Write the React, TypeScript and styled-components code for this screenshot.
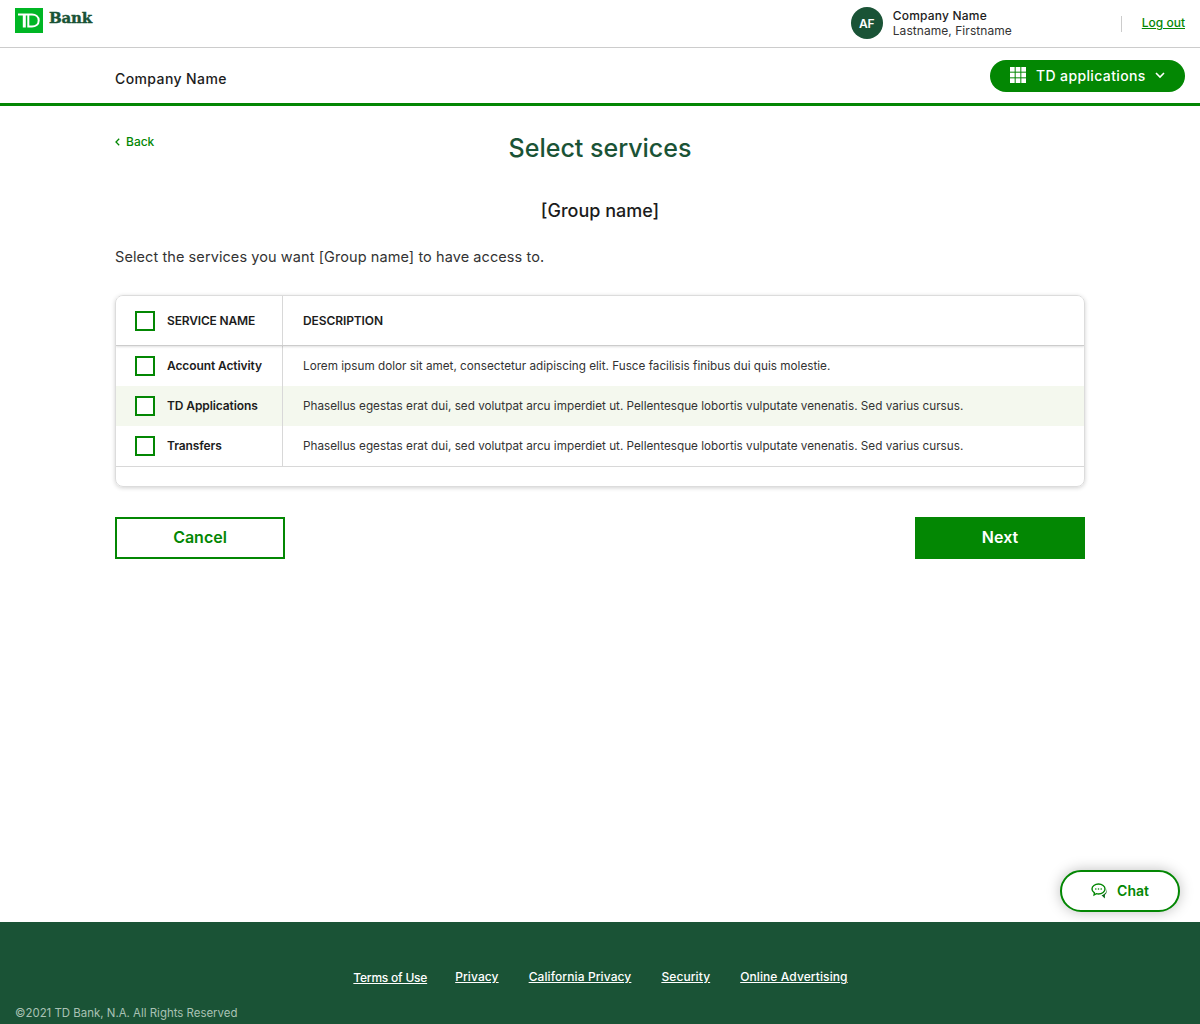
import React from "react";
import styled, { createGlobalStyle } from "styled-components";

const Global = createGlobalStyle`
  html, body { margin: 0; padding: 0; background: #fff; }
  body { font-family: Inter, "Liberation Sans", sans-serif; color: #1c1c1c; }
  * { box-sizing: border-box; }
`;
const Page = styled.div`
  min-height: 1024px; height: 1024px; display: flex; flex-direction: column; position: relative; overflow: hidden;
`;
const TopBar = styled.header`
  height: 48px; flex: none; border-bottom: 1px solid #ccc; display: flex; justify-content: space-between; padding: 0 15px;
`;
const Brand = styled.div`
  display: flex; gap: 6px; padding-top: 8px; align-items: flex-start;
`;
const BankWord = styled.span`
  font-family: "DejaVu Serif", serif; font-weight: 700; font-size: 15px; line-height: 20px; letter-spacing: -0.15px; color: #1a5336;
  -webkit-text-stroke: 0.4px #1a5336;
`;
const Account = styled.div`
  display: flex; align-items: flex-start;
`;
const Avatar = styled.div`
  width: 32px; height: 32px; margin-top: 7px; border-radius: 50%; background: #1a5336; color: #fff;
  font-size: 12px; font-weight: 600; display: flex; align-items: center; justify-content: center;
`;
const Who = styled.div`
  margin-left: 10px; padding-top: 8px; width: 228px; font-size: 12px; line-height: 15px;
`;
const WhoName = styled.div`font-weight: 500; letter-spacing: 0.2px;`;
const WhoPerson = styled.div`color: #333; letter-spacing: 0.05px;`;
const Divider = styled.span`
  width: 1px; height: 16px; margin-top: 16px; background: #ccc;
`;
const LogOut = styled.a`
  margin-left: 20px; margin-top: 15px; font-size: 12px; line-height: 16px; font-weight: 500; color: #038703; text-decoration: underline;
`;
const SubBar = styled.div`
  height: 58px; flex: none; border-bottom: 3px solid #038703; display: flex; justify-content: space-between; padding: 12px 15px 0 115px;
`;
const CompanyLabel = styled.div`
  font-size: 14px; font-weight: 500; line-height: 18px; margin-top: 10px; letter-spacing: 0.4px;
`;
const AppsButton = styled.button`
  width: 195px; height: 32px; border: 0; border-radius: 16px; background: #038703; color: #fff; padding: 0 19px 2px 20px;
  display: flex; align-items: center; font: 500 14px Inter, sans-serif; letter-spacing: 0.37px;
`;
const AppsLabel = styled.span`margin-left: 10px; flex: 1; text-align: left; white-space: nowrap;`;
const Main = styled.main`
  flex: 1; padding: 0 115px; position: relative;
`;
const TitleRow = styled.div`
  position: relative; padding-top: 25px; text-align: center;
`;
const Back = styled.a`
  position: absolute; left: 0; top: 28px; display: flex; align-items: center; gap: 6px; color: #038703; font-size: 12px; line-height: 16px; font-weight: 500;
`;
const Title = styled.h1`
  margin: 0; font-size: 25px; line-height: 34px; font-weight: 500; color: #1a5336;
`;
const Group = styled.h2`
  margin: 34px 0 0; text-align: center; font-size: 18px; line-height: 24px; font-weight: 500; color: #1c1c1c;
`;
const Intro = styled.p`
  margin: 23px 0 0; font-size: 14.5px; line-height: 22px; color: #333; letter-spacing: 0.085px;
`;
const Card = styled.div`
  margin-top: 27px; height: 192px; border: 1px solid #dcdcdc; border-radius: 8px; overflow: hidden; box-shadow: 0 1px 4px rgba(0,0,0,.18);
`;
const Row = styled.div<{ $head?: boolean; $tint?: boolean }>`
  display: grid; grid-template-columns: 167px 1fr;
  height: ${p => (p.$head ? "50px" : "40px")};
  background: ${p => (p.$tint ? "#f4f8ee" : "#fff")};
  ${p => p.$head && "border-bottom: 1px solid #ccc; box-shadow: 0 1px 2px rgba(0,0,0,.12); position: relative;"}
`;
const NameCell = styled.div`
  display: flex; align-items: center; gap: 12px; padding-left: 19px; border-right: 1px solid #d8d8d8;
`;
const DescCell = styled.div<{ $head?: boolean }>`
  display: flex; align-items: center; padding-left: 20px; white-space: nowrap;
  font-size: ${p => (p.$head ? "12px" : "11.72px")}; font-weight: ${p => (p.$head ? 600 : 400)}; color: ${p => (p.$head ? "#1c1c1c" : "#333")};
  letter-spacing: ${p => (p.$head ? "-0.1px" : "0")};
`;
const Box = styled.span`
  width: 20px; height: 20px; flex: none; border: 2px solid #038703; background: #fff;
`;
const RowName = styled.span<{ $head?: boolean }>`
  font-size: 12px; font-weight: 600; white-space: nowrap; color: #1c1c1c; line-height: 16px;
  letter-spacing: ${p => (p.$head ? "-0.17px" : "-0.1px")}; margin-top: ${p => (p.$head ? "0" : "-1px")};
`;
const TableEnd = styled.div`
  border-top: 1px solid #d8d8d8; height: 20px;
`;
const Actions = styled.div`
  display: flex; justify-content: space-between; margin-top: 30px;
`;
const ActionButton = styled.button<{ $primary?: boolean }>`
  width: 170px; height: 42px; padding: 0 0 2px; font: 600 16px Inter, sans-serif; border: 2px solid #038703; border-radius: 0;
  background: ${p => (p.$primary ? "#038703" : "#fff")}; color: ${p => (p.$primary ? "#fff" : "#038703")};
`;
const Chat = styled.button`
  position: absolute; right: 20px; top: 870px; width: 120px; height: 42px; border-radius: 21px; border: 2px solid #038703; background: #fff;
  color: #038703; font: 600 14px Inter, sans-serif; display: flex; align-items: center; justify-content: center; gap: 9px; padding: 0 6px 1px;
  box-shadow: 0 0 14px rgba(0,0,0,.25);
`;
const Footer = styled.footer`
  height: 102px; flex: none; background: #1a5336; padding: 47px 15px 0; position: relative;
`;
const Links = styled.nav`
  display: flex; justify-content: center; gap: 30px; padding-left: 1px;
`;
const FootLink = styled.a`
  color: #fff; font-size: 12px; line-height: 16px; font-weight: 500; text-decoration: underline; letter-spacing: 0.1px;
`;
const TermsLink = styled(FootLink)`
  letter-spacing: -0.22px; margin: 1px -2px -1px 0;
`;
const Copy = styled.div`
  margin-top: 20px; font-size: 11.45px; line-height: 16px; color: #a9c2b4;
`;

const Logo = () => (
  <svg width="28" height="25" viewBox="0 0 28 25" aria-label="TD">
    <rect width="28" height="25" fill="#00b624" />
    <g fill="none" stroke="#fff">
      <path d="M3 6.500H17" strokeWidth="2" />
      <path d="M9.300 6.500V19.500" strokeWidth="3" />
      <path d="M13.300 6.500V18.600H17C20.500 18.600 23.700 16.600 23.700 12.500C23.700 8.500 20.500 6.500 17 6.500" strokeWidth="2" />
    </g>
  </svg>
);
const Grid = () => (
  <svg width="16" height="16" viewBox="0 0 16 16" fill="#fff">
    {[0, 5.67, 11.33].flatMap(y => [0, 5.67, 11.33].map(x => <rect key={`${x}-${y}`} x={x} y={y} width="4.67" height="4.67" />))}
  </svg>
);
const Caret = () => (
  <svg width="12" height="12" viewBox="0 0 12 12" fill="none" stroke="#fff" strokeWidth="1.6"><path d="M2 4l4 4 4-4" /></svg>
);
const BackIcon = () => (
  <svg width="5" height="8" viewBox="0 0 5 8" fill="none" stroke="#038703" strokeWidth="1.3"><path d="M4.200.8L1 4l3.200 3.200" /></svg>
);
const ChatIcon = () => (
  <svg width="17" height="16" viewBox="0 0 17 16">
    <path d="M7.500 1C3.900 1 1 3.200 1 6c0 1.600 1 3 2.400 3.900l-.3 2 2.300-1.200c.7.2 1.400.3 2.100.3 3.600 0 6.500-2.200 6.500-5S11.100 1 7.500 1z" fill="none" stroke="#038703" strokeWidth="1.400" />
    <path d="M15.500 5c1 3.600-1.800 6.500-5 7.300l3.300 3.200.2-3.700c1.800-1.300 2.500-4.300 1.500-6.800z" fill="#0b6b1c" />
    <circle cx="4.800" cy="6" r=".8" fill="#038703" /><circle cx="7.500" cy="6" r=".8" fill="#038703" /><circle cx="10.200" cy="6" r=".8" fill="#038703" />
  </svg>
);

const rows = [
  ["Account Activity", "Lorem ipsum dolor sit amet, consectetur adipiscing elit. Fusce facilisis finibus dui quis molestie."],
  ["TD Applications", "Phasellus egestas erat dui, sed volutpat arcu imperdiet ut. Pellentesque lobortis vulputate venenatis. Sed varius cursus."],
  ["Transfers", "Phasellus egestas erat dui, sed volutpat arcu imperdiet ut. Pellentesque lobortis vulputate venenatis. Sed varius cursus."],
];

export default function App() {
  return (
    <Page>
      <Global />
      <TopBar>
        <Brand><Logo /><BankWord>Bank</BankWord></Brand>
        <Account>
          <Avatar>AF</Avatar>
          <Who><WhoName>Company Name</WhoName><WhoPerson>Lastname, Firstname</WhoPerson></Who>
          <Divider />
          <LogOut>Log out</LogOut>
        </Account>
      </TopBar>
      <SubBar>
        <CompanyLabel>Company Name</CompanyLabel>
        <AppsButton><Grid /><AppsLabel>TD applications</AppsLabel><Caret /></AppsButton>
      </SubBar>
      <Main>
        <TitleRow>
          <Back><BackIcon />Back</Back>
          <Title>Select services</Title>
        </TitleRow>
        <Group>[Group name]</Group>
        <Intro>Select the services you want [Group name] to have access to.</Intro>
        <Card>
          <Row $head>
            <NameCell><Box /><RowName $head>SERVICE NAME</RowName></NameCell>
            <DescCell $head>DESCRIPTION</DescCell>
          </Row>
          {rows.map(([name, desc], i) => (
            <Row key={name} $tint={i === 1}>
              <NameCell><Box /><RowName>{name}</RowName></NameCell>
              <DescCell>{desc}</DescCell>
            </Row>
          ))}
          <TableEnd />
        </Card>
        <Actions>
          <ActionButton>Cancel</ActionButton>
          <ActionButton $primary>Next</ActionButton>
        </Actions>
      </Main>
      <Chat><ChatIcon />Chat</Chat>
      <Footer>
        <Links>
          <TermsLink>Terms of Use</TermsLink>
          <FootLink>Privacy</FootLink>
          <FootLink>California Privacy</FootLink>
          <FootLink>Security</FootLink>
          <FootLink>Online Advertising</FootLink>
        </Links>
        <Copy>©2021 TD Bank, N.A. All Rights Reserved</Copy>
      </Footer>
    </Page>
  );
}
